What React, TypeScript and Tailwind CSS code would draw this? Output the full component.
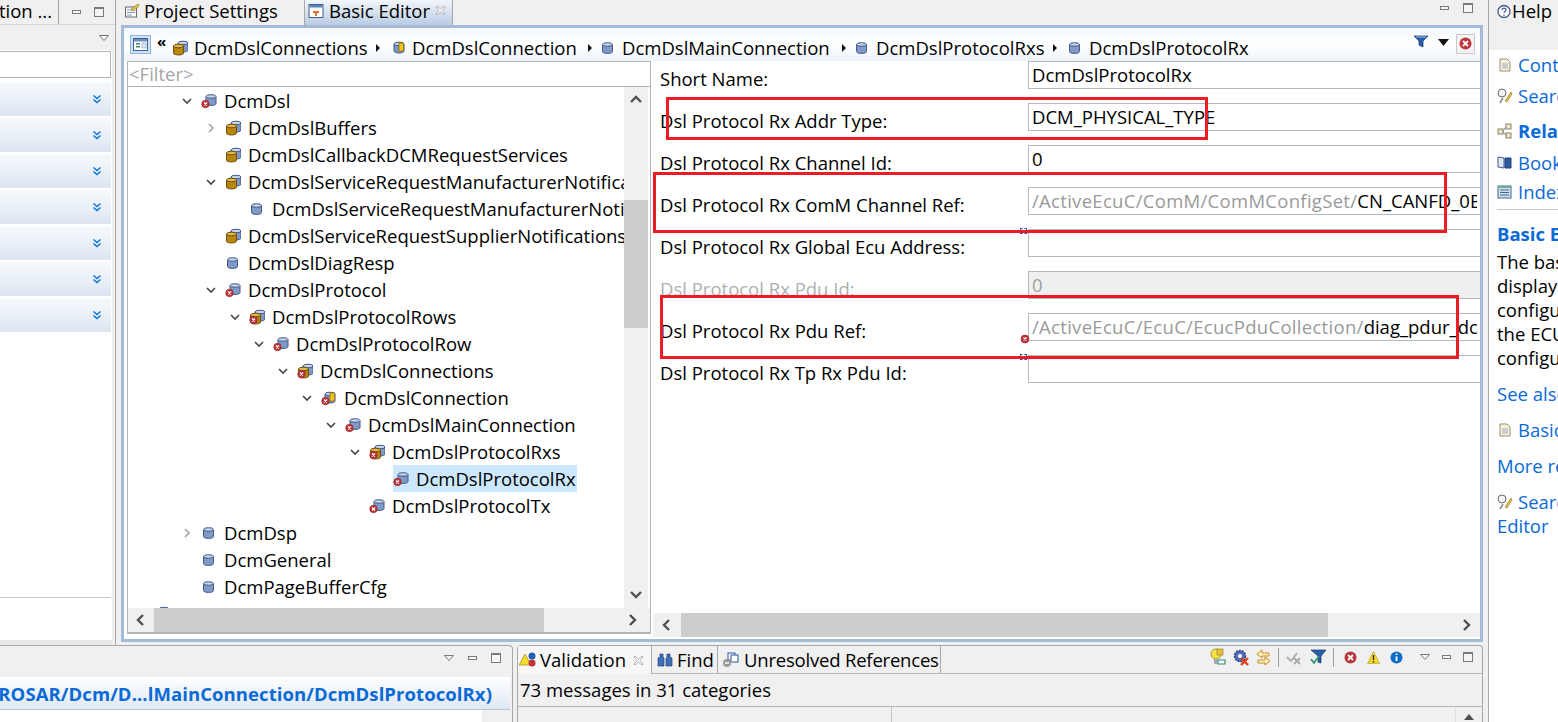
import React from "react";

const font = "font-['Open_Sans','Liberation_Sans',sans-serif]";

function Cyl({ x = 0, y = 0, fill = "#7f9ac4", top = "#c3d3ea", stroke = "#41598c", w = 10, h = 11 }: any) {
  return (
    <g>
      <path d={`M${x} ${y + 2}v${h - 4}c0 2.6 ${w} 2.6 ${w} 0v-${h - 4}`} fill={fill} stroke={stroke} strokeWidth="1" />
      <ellipse cx={x + w / 2} cy={y + 2} rx={w / 2} ry="1.8" fill={top} stroke={stroke} strokeWidth="1" />
    </g>
  );
}

function ErrBadge({ cx = 4.5, cy = 11, r = 3.8 }: any) {
  return (
    <g>
      <circle cx={cx} cy={cy} r={r} fill="#c0333a" stroke="#8c2a2a" strokeWidth=".6" />
      <path d={`M${cx - 1.5} ${cy - 1.5}l3 3m0-3l-3 3`} stroke="#fff" strokeWidth="1.1" />
    </g>
  );
}

function NodeIcon({ kind, err }: { kind: string; err?: boolean }) {
  return (
    <svg width="16" height="16" viewBox="0 0 16 16" className="shrink-0">
      {kind === "blue" && <Cyl x={err ? 5 : 2.5} y={err ? 1.5 : 2.5} />}
      {kind === "gold" && (
        <g>
          <Cyl x={6} y={1} />
          <Cyl x={1.5} y={4} w={10} fill="#b8860b" top="#e2b84c" stroke="#6f4f0a" />
        </g>
      )}
      {kind === "yellow" && (
        <g>
          <Cyl x={4} y={2} />
          <rect x="9" y="3" width="4.5" height="8" fill="#f5c518" stroke="#8a6d0a" strokeWidth=".7" />
        </g>
      )}
      {err && <ErrBadge />}
    </svg>
  );
}

function Chev({ open, light }: { open?: boolean; light?: boolean }) {
  return (
    <svg width="16" height="16" viewBox="0 0 16 16" className="shrink-0">
      {open ? (
        <path d="M4 6l4 4 4-4" fill="none" stroke="#4a4a4a" strokeWidth="1.7" />
      ) : (
        <path d="M6 4l4 4-4 4" fill="none" stroke={light ? "#a6a6a6" : "#4a4a4a"} strokeWidth="1.7" />
      )}
    </svg>
  );
}

const rows = [
  { t: "DcmDsl", pad: "pl-[51px]", open: true, kind: "blue", err: true },
  { t: "DcmDslBuffers", pad: "pl-[75px]", closed: true, kind: "gold" },
  { t: "DcmDslCallbackDCMRequestServices", pad: "pl-[75px]", kind: "gold" },
  { t: "DcmDslServiceRequestManufacturerNotifications", pad: "pl-[75px]", open: true, kind: "gold" },
  { t: "DcmDslServiceRequestManufacturerNotification", pad: "pl-[99px]", kind: "blue" },
  { t: "DcmDslServiceRequestSupplierNotifications", pad: "pl-[75px]", kind: "gold" },
  { t: "DcmDslDiagResp", pad: "pl-[75px]", kind: "blue" },
  { t: "DcmDslProtocol", pad: "pl-[75px]", open: true, kind: "blue", err: true },
  { t: "DcmDslProtocolRows", pad: "pl-[99px]", open: true, kind: "gold", err: true },
  { t: "DcmDslProtocolRow", pad: "pl-[123px]", open: true, kind: "blue", err: true },
  { t: "DcmDslConnections", pad: "pl-[147px]", open: true, kind: "gold", err: true },
  { t: "DcmDslConnection", pad: "pl-[171px]", open: true, kind: "yellow", err: true },
  { t: "DcmDslMainConnection", pad: "pl-[195px]", open: true, kind: "blue", err: true },
  { t: "DcmDslProtocolRxs", pad: "pl-[219px]", open: true, kind: "gold", err: true },
  { t: "DcmDslProtocolRx", pad: "pl-[243px]", kind: "blue", err: true, sel: true },
  { t: "DcmDslProtocolTx", pad: "pl-[219px]", kind: "blue", err: true },
  { t: "DcmDsp", pad: "pl-[51px]", closed: true, kind: "blue" },
  { t: "DcmGeneral", pad: "pl-[51px]", kind: "blue" },
  { t: "DcmPageBufferCfg", pad: "pl-[51px]", kind: "blue" },
  { t: "Fee", pad: "pl-[3px]", closed: true, kind: "gold" },
];

function Tree() {
  return (
    <div className="flex-1 min-w-0 overflow-hidden">
      {rows.map((r) => (
        <div key={r.t} className={`flex items-center h-[27px] whitespace-nowrap ${r.pad}`}>
          <span className="w-[16px] shrink-0">
            {r.open && <Chev open />}
            {r.closed && <Chev light />}
          </span>
          <span className={`flex items-center h-[27px] ml-[6px] pr-[1px] ${r.sel ? "bg-[#cce8ff]" : ""}`}>
            <NodeIcon kind={r.kind} err={r.err} />
            <span className="ml-[7px]">{r.t}</span>
          </span>
        </div>
      ))}
    </div>
  );
}

function Arrow({ d }: { d: string }) {
  return (
    <svg width="14" height="14" viewBox="0 0 14 14" className="shrink-0">
      <path d={d} fill="none" stroke="#505050" strokeWidth="2.4" />
    </svg>
  );
}

const LEFT = "M9 2L4 7l5 5";
const RIGHT = "M5 2l5 5-5 5";

function Field({ gray, text, disabled, mark }: any) {
  return (
    <div className={`relative flex-1 min-w-0 h-[28px] border border-[#b4b8c0] border-r-0 px-[3px] pb-[1px] flex items-center whitespace-nowrap ${disabled ? "bg-[#efefef] text-[#a0a0a0]" : "bg-white"}`}>
      <span className="overflow-hidden block w-full">
        {gray && <span className="text-[#9a9a9a] tracking-[0.3px]">{gray}</span>}
        {text}
      </span>
      {mark === "err" && (
        <svg width="10" height="10" viewBox="0 0 10 10" className="absolute left-[-9px] top-[20px]">
          <ErrBadge cx={5} cy={5} r={4} />
        </svg>
      )}
    </div>
  );
}

function Dash({ pos }: { pos: string }) {
  return <span className={`absolute w-[7px] h-[6px] border border-dashed border-[#2458a8] ${pos}`} />;
}

const formRows: any[] = [
  { l: "Short Name:", text: "DcmDslProtocolRx" },
  { l: "Dsl Protocol Rx Addr Type:", text: "DCM_PHYSICAL_TYPE" },
  { l: "Dsl Protocol Rx Channel Id:", text: "0" },
  { l: "Dsl Protocol Rx ComM Channel Ref:", gray: "/ActiveEcuC/ComM/ComMConfigSet/", text: "CN_CANFD_0B_BCM" },
  { l: "Dsl Protocol Rx Global Ecu Address:", text: "", dash: "left-[-8px] top-[-1px]" },
  { l: "Dsl Protocol Rx Pdu Id:", text: "0", disabled: true, dim: true },
  { l: "Dsl Protocol Rx Pdu Ref:", gray: "/ActiveEcuC/EcuC/EcucPduCollection/", text: "diag_pdur_dcm_rx_phys", mark: "err" },
  { l: "Dsl Protocol Rx Tp Rx Pdu Id:", text: "", dash: "left-[-8px] top-[-1px]" },
];

function Form() {
  return (
    <div className="flex-1 min-h-0 flex flex-col gap-[14px] overflow-hidden">
      {formRows.map((f) => (
        <div key={f.l} className="flex items-start pl-[7px] relative">
          <div className={`w-[368px] h-[28px] shrink-0 whitespace-nowrap pt-[6px] ${f.dim ? "text-[#b0b0b0]" : ""}`}>{f.l}</div>
          <div className="relative flex-1 min-w-0 flex">
            <Field gray={f.gray} text={f.text} disabled={f.disabled} mark={f.mark} />
            {f.dash && <Dash pos={f.dash} />}
          </div>
        </div>
      ))}
    </div>
  );
}

function ViewMin() {
  return <span className="block w-[9px] h-[4px] border border-[#7a7a7a] bg-[#f4f4f4]" />;
}
function ViewMax() {
  return <span className="block w-[10px] h-[10px] border border-[#7a7a7a] bg-[#f4f4f4] border-t-2" />;
}
function ViewMenu() {
  return (
    <svg width="10" height="6" viewBox="0 0 10 6">
      <path d="M.5.5h9L5 5.5z" fill="#f6f6f6" stroke="#7a7a7a" />
    </svg>
  );
}

function Tri() {
  return (
    <svg width="6" height="10" viewBox="0 0 6 10" className="shrink-0">
      <path d="M1 1l4 4-4 4z" fill="#111" />
    </svg>
  );
}

function Breadcrumb() {
  return (
    <div className="flex items-center h-[33px] shrink-0 pl-[6px] pr-[5px] bg-gradient-to-b from-[#f4f8fd] via-white to-[#eef3f9] overflow-hidden whitespace-nowrap">
      <span className="w-[21px] h-[19px] bg-[#cfe3f7] border border-[#8fb6de] flex items-center justify-center shrink-0 mb-[1px]">
        <svg width="15" height="13" viewBox="0 0 15 13">
          <rect x=".5" y=".5" width="14" height="12" fill="#fff" stroke="#3f5f8f" />
          <rect x="1" y="1" width="13" height="2.5" fill="#6f8fc0" />
          <rect x="3" y="5" width="4" height="1.5" fill="#3f8f6f" />
          <rect x="3" y="8" width="4" height="1.5" fill="#3f8f6f" />
          <rect x="9" y="5" width="4" height="5" fill="#dde6f2" stroke="#7a90b0" strokeWidth=".5" />
        </svg>
      </span>
      <span className="ml-[6px] w-[8px] text-[15px] font-bold leading-none mb-[6px] shrink-0">«</span>
      <span className="flex items-center mt-[7px] ml-[7px]">
        <NodeIcon kind="gold" />
        <span className="ml-[6px] w-[181px]">DcmDslConnections</span>
        <Tri />
        <span className="ml-[9px]"><NodeIcon kind="yellow" /></span>
        <span className="ml-[6px] w-[175px]">DcmDslConnection</span>
        <Tri />
        <span className="ml-[7px]"><NodeIcon kind="blue" /></span>
        <span className="ml-[6px] w-[219px]">DcmDslMainConnection</span>
        <Tri />
        <span className="ml-[7px]"><NodeIcon kind="blue" /></span>
        <span className="ml-[6px] w-[176px]">DcmDslProtocolRxs</span>
        <Tri />
        <span className="ml-[9px]"><NodeIcon kind="blue" /></span>
        <span className="ml-[6px]">DcmDslProtocolRx</span>
      </span>
      <span className="flex-1" />
      <svg width="16" height="13" viewBox="0 0 16 13" className="shrink-0 mb-[6px]">
        <path d="M1 1h14l-5 5v6l-4-2V6z" fill="#2a5ea8" stroke="#17356a" strokeWidth=".7" />
        <path d="M3 2h10" stroke="#8fc0f0" />
      </svg>
      <svg width="11" height="7" viewBox="0 0 11 7" className="ml-[9px] shrink-0 mb-[4px]">
        <path d="M0 0h11L5.500 7z" fill="#111" />
      </svg>
      <span className="ml-[7px] w-[19px] h-[20px] bg-[#f4f4f4] border border-[#c9c9c9] flex items-center justify-center shrink-0 mb-[2px]">
        <svg width="13" height="13" viewBox="0 0 13 13">
          <circle cx="6.500" cy="6.500" r="6" fill="#c0343b" />
          <path d="M4 4l5 5m0-5l-5 5" stroke="#fff" strokeWidth="1.800" />
        </svg>
      </span>
    </div>
  );
}

function Section() {
  return (
    <div className="h-[34px] bg-gradient-to-b from-[#f7fafd] to-[#dbe5f1] flex items-center justify-end pr-[9px]">
      <svg width="10" height="10" viewBox="0 0 10 10">
        <path d="M1.500 1.500L5 4.500l3.500-3M1.500 5.500L5 8.500l3.500-3" fill="none" stroke="#0a6fd8" strokeWidth="1.400" />
      </svg>
    </div>
  );
}

function LeftPanel() {
  return (
    <div className="w-[116px] shrink-0 flex flex-col border-r border-[#a8a8a8]">
      <div className="h-[25px] flex items-center border-b border-[#d6d6d6] overflow-hidden">
        <span className="w-[59px] h-full border-r border-[#a8a8a8] flex items-center justify-end pr-[6px] pb-[2px] whitespace-nowrap overflow-hidden shrink-0">
          tion ...
        </span>
        <span className="ml-[13px]"><ViewMin /></span>
        <span className="ml-[13px]"><ViewMax /></span>
      </div>
      <div className="flex-1 mr-[3px] flex flex-col min-h-0">
        <div className="h-[25px] flex items-center justify-end pr-[3px] shrink-0"><ViewMenu /></div>
        <div className="flex-1 bg-white flex flex-col pr-[1px] min-h-0">
          <div className="h-[30px] py-[1px] shrink-0">
            <div className="h-[27px] border border-[#b4b4b4] border-l-0 bg-white" />
          </div>
          <div className="flex flex-col gap-[2px] mt-[2px]">
            <Section /><Section /><Section /><Section /><Section /><Section /><Section />
          </div>
          <div className="mt-[265px] border-t border-[#c8c8c8] flex-1" />
        </div>
        <div className="h-[5px] bg-[#e6e6e6] shrink-0" />
      </div>
    </div>
  );
}

function Editor() {
  return (
    <div className="w-[1362px] shrink-0 flex flex-col ml-[5px] pb-[3px]">
      <div className="h-[25px] flex items-stretch pl-[1px] shrink-0">
        <div className="w-[183px] flex items-center pl-[2px] pb-[4px] border-r border-[#a8a8a8]">
          <svg width="16" height="16" viewBox="0 0 16 16" className="shrink-0">
            <rect x="1.500" y="4" width="11" height="10" fill="#fff" stroke="#6a6a6a" />
            <path d="M3 7h8M3 9.500h8M3 12h5" stroke="#7a8fb0" />
            <path d="M7 6l7-5 1 2-6 5z" fill="#e9c24c" stroke="#8a6d1a" strokeWidth=".6" />
          </svg>
          <span className="ml-[4px] whitespace-nowrap">Project Settings</span>
        </div>
        <div className="w-[148px] flex items-center pl-[3px] pb-[4px] bg-gradient-to-b from-[#f3f6fb] to-[#b9cce3] border-r border-[#a8a8a8]">
          <svg width="16" height="16" viewBox="0 0 16 16" className="shrink-0">
            <rect x="1" y="1.500" width="14" height="13" fill="#fff" stroke="#3f5f8f" />
            <rect x="1.500" y="2" width="13" height="2.500" fill="#5c7fbc" />
            <path d="M5 8h6v2H9v3H7v-3H5z" fill="#d9762a" />
          </svg>
          <span className="ml-[5px] whitespace-nowrap">Basic Editor</span>
          <svg width="11" height="11" viewBox="0 0 11 11" className="ml-[5px] shrink-0">
            <path d="M2 1l3.500 3L9 1l1 1-3 3.500 3 3.500-1 1-3.500-3L2 10 1 9l3-3.500L1 2z" fill="#fff" stroke="#9a9a9a" strokeWidth=".8" />
          </svg>
        </div>
        <div className="flex-1" />
        <div className="flex items-center gap-[14px] pr-[10px] pb-[10px]">
          <ViewMin /><ViewMax />
        </div>
      </div>
      <div className="flex-1 min-h-0 border-[3px] border-[#a3bbd7] bg-white flex flex-col">
        <Breadcrumb />
        <div className="flex-1 min-h-0 flex pl-[3px]">
          <div className="w-[524px] shrink-0 border border-[#b4b4b4] flex flex-col border-b-[2px] mb-[5px]">
            <div className="h-[25px] shrink-0 border-b border-[#b4b4b4] px-[1px] flex items-center text-[#a6a6a6]">&lt;Filter&gt;</div>
            <div className="flex-1 min-h-0 flex">
              <Tree />
              <div className="w-[24px] shrink-0 bg-[#f0f0f0] flex flex-col items-center">
                <div className="h-[113px] w-full shrink-0 pt-[6px] flex justify-center">
                  <Arrow d="M2 9l5-5 5 5" />
                </div>
                <div className="h-[128px] w-full bg-[#cdcdcd] shrink-0" />
                <div className="flex-1" />
                <div className="pb-[7px]"><Arrow d="M2 5l5 5 5-5" /></div>
              </div>
              <div className="w-[2px] shrink-0" />
            </div>
            <div className="h-[24px] shrink-0 bg-[#f0f0f0] flex items-center">
              <div className="w-[26px] flex justify-center"><Arrow d={LEFT} /></div>
              <div className="w-[390px] h-full bg-[#cdcdcd]" />
              <div className="flex-1" />
              <div className="w-[36px] flex justify-center"><Arrow d={RIGHT} /></div>
            </div>
          </div>
          <div className="flex-1 min-w-0 flex flex-col pl-[2px]">
            <Form />
            <div className="h-[24px] shrink-0 bg-[#f0f0f0] flex items-center mb-[2px]">
              <div className="w-[28px] flex justify-center"><Arrow d={LEFT} /></div>
              <div className="w-[647px] h-full bg-[#cdcdcd]" />
              <div className="flex-1" />
              <div className="w-[28px] flex justify-center"><Arrow d={RIGHT} /></div>
            </div>
          </div>
        </div>
      </div>
    </div>
  );
}

function HelpIcon({ c }: { c: string }) {
  if (c === "key")
    return (
      <svg width="16" height="16" viewBox="0 0 16 16" className="shrink-0">
        <circle cx="5" cy="5" r="4" fill="#f4f4f4" stroke="#6a6a6a" />
        <path d="M8 13l6-9 1 2-5 8z" fill="#e9c24c" stroke="#8a6d1a" strokeWidth=".6" />
        <path d="M3 15l3-5" stroke="#888" strokeWidth="1.500" />
      </svg>
    );
  if (c === "rel")
    return (
      <svg width="16" height="16" viewBox="0 0 16 16" className="shrink-0">
        <rect x="1" y="6" width="5" height="5" fill="#efe8cf" stroke="#8a8460" />
        <rect x="9" y="1" width="5" height="5" fill="#efe8cf" stroke="#8a8460" />
        <rect x="9" y="10" width="5" height="5" fill="#efe8cf" stroke="#8a8460" />
        <path d="M6 8l3-4M6 9l3 3" stroke="#6a7a9a" />
      </svg>
    );
  if (c === "book")
    return (
      <svg width="16" height="16" viewBox="0 0 16 16" className="shrink-0">
        <path d="M1 2l6 1v10l-6-1z" fill="#dfe8f5" stroke="#41598c" />
        <path d="M8 3h6v10H8z" fill="#2c5aa0" stroke="#1e3f78" />
      </svg>
    );
  if (c === "index")
    return (
      <svg width="16" height="16" viewBox="0 0 16 16" className="shrink-0">
        <rect x="1" y="2" width="13" height="12" fill="#cfe0f2" stroke="#41698c" />
        <path d="M3 6h9M3 8.500h9M3 11h9" stroke="#41698c" />
        <path d="M1 2h13v2H1z" fill="#6fae8f" />
      </svg>
    );
  return (
    <svg width="16" height="16" viewBox="0 0 16 16" className="shrink-0">
      <path d="M3 2h7l3 3v9H3z" fill="#f7f3e2" stroke="#9a8f62" />
      <path d="M5 7h6M5 9h6M5 11h6" stroke="#9aa6c0" />
    </svg>
  );
}

function HelpPanel() {
  const L = "text-[#0a6ad6]";
  return (
    <div className="w-[70px] shrink-0 ml-[5px] border-l border-[#a8a8a8] flex flex-col overflow-hidden whitespace-nowrap">
      <div className="h-[25px] shrink-0 pl-[7px] pb-[3px] flex items-center">
        <svg width="15" height="15" viewBox="0 0 15 15" className="shrink-0">
          <circle cx="8" cy="7.500" r="6" fill="#fff" stroke="#41598c" strokeWidth="1.300" />
          <path d="M6 6c0-2.500 4-2.500 4 0 0 1.500-2 1.500-2 3M8 10.500v1.500" fill="none" stroke="#41598c" strokeWidth="1.200" />
        </svg>
        <span className="ml-[1px]">Help</span>
      </div>
      <div className="h-[25px] shrink-0" />
      <div className="flex-1 bg-white pl-[8px] flex flex-col">
        <div className={`flex items-center h-[30px] ${L}`}><HelpIcon c="page" /><span className="ml-[5px]">Contents</span></div>
        <div className={`flex items-center h-[32px] ${L}`}><HelpIcon c="key" /><span className="ml-[5px]">Search</span></div>
        <div className={`flex items-center h-[38px] ${L} font-bold`}><HelpIcon c="rel" /><span className="ml-[5px]">Related Topics</span></div>
        <div className={`flex items-center h-[26px] ${L}`}><HelpIcon c="book" /><span className="ml-[5px]">Bookmarks</span></div>
        <div className={`flex items-center h-[32px] ${L}`}><HelpIcon c="index" /><span className="ml-[5px]">Index</span></div>
        <div className="border-t border-[#c8c8c8] mt-[1px]" />
        <div className={`h-[26px] mt-[11px] flex items-center font-bold ${L}`}>Basic Editor</div>
        <div className="leading-[24px] mt-[3px]">
          <div>The basic editor</div>
          <div>displays the</div>
          <div>configuration of</div>
          <div>the ECU</div>
          <div>configuration</div>
        </div>
        <div className={`mt-[12px] h-[24px] flex items-center ${L}`}>See also</div>
        <div className={`mt-[12px] h-[24px] flex items-center ${L}`}><HelpIcon c="page" /><span className="ml-[5px]">Basic</span></div>
        <div className={`mt-[12px] h-[24px] flex items-center ${L}`}>More results</div>
        <div className={`mt-[12px] h-[24px] flex items-center ${L}`}><HelpIcon c="key" /><span className="ml-[5px]">Search</span></div>
        <div className={`h-[24px] flex items-center ${L}`}>Editor</div>
      </div>
    </div>
  );
}

function BottomLeft() {
  return (
    <div className="w-[513px] shrink-0 border border-[#a8a8a8] border-l-0 border-b-0 rounded-tr-[4px] flex flex-col overflow-hidden">
      <div className="h-[28px] shrink-0 flex items-center justify-end gap-[14px] pr-[11px] pb-[5px]">
        <ViewMenu /><ViewMin /><ViewMax />
      </div>
      <div className="mr-[2px] bg-white flex flex-col mt-[3px] shrink-0">
        <div className="h-[33px] pt-[2px] bg-gradient-to-b from-white to-[#dfe8f3] border-b border-[#b8c6d6] flex items-center justify-end pr-[18px] whitespace-nowrap overflow-hidden text-[#0a6ad6] font-bold tracking-[0.08px]">
          ROSAR/Dcm/D...lMainConnection/DcmDslProtocolRx)
        </div>
      </div>
      <div className="flex-1 flex">
        <div className="flex-1 bg-white" />
        <div className="w-[30px]" />
      </div>
    </div>
  );
}

function ToolIcons() {
  return (
    <div className="flex items-center">
      <svg width="18" height="18" viewBox="0 0 18 18">
        <circle cx="7" cy="6" r="5" fill="#f6e24a" stroke="#a89a20" />
        <rect x="8" y="1" width="6" height="6" fill="#e8c23a" stroke="#8a7a20" strokeWidth=".6" />
        <path d="M5 11h3v5H5z" fill="#aaa" />
        <path d="M9 12h7v4H9z" fill="#fff" stroke="#2f8a7a" strokeWidth="1.200" />
      </svg>
      <svg width="17" height="17" viewBox="0 0 17 17" className="ml-[6px]">
        <circle cx="7" cy="7" r="5.500" fill="#4f6fb8" stroke="#2c427c" strokeDasharray="2 1" strokeWidth="1.500" />
        <circle cx="7" cy="7" r="2" fill="#fff" />
        <path d="M8 9l7 7m0-7l-7 7" stroke="#e0401c" strokeWidth="2.400" />
      </svg>
      <svg width="17" height="17" viewBox="0 0 17 17" className="ml-[5px]">
        <path d="M7 1L2 5l5 4V7h7V4H7zM10 8l5 4-5 4v-2H3v-3h7z" fill="#fdf0c8" stroke="#c98a12" strokeWidth="1" />
      </svg>
      <span className="w-px h-[19px] bg-[#a0a0a0] ml-[6px]" />
      <svg width="16" height="16" viewBox="0 0 16 16" className="ml-[7px]">
        <path d="M1 8l4 4 6-8" fill="none" stroke="#b0b0b0" strokeWidth="2" />
        <path d="M8 9l6 6m0-6l-6 6" stroke="#a8a8a8" strokeWidth="2" />
      </svg>
      <svg width="16" height="16" viewBox="0 0 16 16" className="ml-[8px]">
        <path d="M1 1h15l-5 6v7l-3-1V7z" fill="#2a5ea8" stroke="#17356a" strokeWidth=".7" />
        <path d="M1 10l3 4 5-7" fill="none" stroke="#2f9a6a" strokeWidth="1.800" />
      </svg>
      <span className="w-px h-[19px] bg-[#a0a0a0] ml-[7px]" />
      <svg width="13" height="13" viewBox="0 0 13 13" className="ml-[10px]">
        <circle cx="6.500" cy="6.500" r="6" fill="#b9353a" />
        <path d="M4 4l5 5m0-5l-5 5" stroke="#fff" strokeWidth="1.800" />
      </svg>
      <svg width="13" height="13" viewBox="0 0 13 13" className="ml-[10px]">
        <path d="M6.500 .5l6 12H.5z" fill="#f6d92a" stroke="#a89a20" strokeWidth=".6" />
        <path d="M6.500 4v5M6.500 10v1.500" stroke="#222" strokeWidth="1.300" />
      </svg>
      <svg width="13" height="13" viewBox="0 0 13 13" className="ml-[10px]">
        <circle cx="6.500" cy="6.500" r="6" fill="#0e6cc4" />
        <path d="M6.500 5.500v4.500M6.500 2.500v1.500" stroke="#fff" strokeWidth="1.800" />
      </svg>
      <span className="ml-[17px]"><ViewMenu /></span>
      <span className="ml-[12px]"><ViewMin /></span>
      <span className="ml-[12px] mr-[9px]"><ViewMax /></span>
    </div>
  );
}

function Validation() {
  return (
    <div className="flex-1 min-w-0 ml-[4px] border border-[#a8a8a8] border-b-0 rounded-t-[4px] flex flex-col">
      <div className="h-[28px] shrink-0 flex items-stretch border-b border-[#b8b8b8] whitespace-nowrap">
        <div className="w-[134px] shrink-0 flex items-center pl-[1px] bg-[#f7f7f7] border-r border-[#a8a8a8] -mb-px">
          <svg width="20" height="18" viewBox="0 0 20 18" className="shrink-0">
            <path d="M6 3l6 11H0z" fill="#f6d92a" stroke="#9a8a20" strokeWidth=".7" />
            <circle cx="13" cy="5" r="3.500" fill="#1d5fb5" />
            <circle cx="13" cy="12" r="3.500" fill="#c0333a" />
          </svg>
          <span className="ml-[1px]">Validation</span>
          <svg width="11" height="11" viewBox="0 0 11 11" className="ml-[7px] shrink-0">
            <path d="M2 1l3.500 3L9 1l1 1-3 3.500 3 3.500-1 1-3.500-3L2 10 1 9l3-3.500L1 2z" fill="#fff" stroke="#9a9a9a" strokeWidth=".8" />
          </svg>
        </div>
        <div className="w-[66px] shrink-0 flex items-center pl-[5px] border-r border-[#a8a8a8]">
          <svg width="16" height="14" viewBox="0 0 16 14" className="shrink-0">
            <path d="M3 1h3v3l1 1v8H1V5l2-1zM10 1h3v3l2 1v8H9V5l1-1z" fill="#3f6fb8" stroke="#23447a" strokeWidth=".7" />
          </svg>
          <span className="ml-[4px]">Find</span>
        </div>
        <div className="w-[223px] shrink-0 flex items-center pl-[4px] border-r border-[#a8a8a8]">
          <svg width="17" height="16" viewBox="0 0 17 16" className="shrink-0">
            <rect x="6" y="1" width="7" height="7" fill="#fff" stroke="#2c5aa0" />
            <rect x="9" y="3" width="7" height="7" fill="#fff" stroke="#2c5aa0" />
            <circle cx="5" cy="11" r="4" fill="#9a9a9a" />
            <path d="M3 11h4" stroke="#fff" strokeWidth="1.400" />
          </svg>
          <span className="ml-[5px] tracking-[-0.2px]">Unresolved References</span>
        </div>
        <div className="flex-1 flex items-center justify-end -mt-[5px]"><ToolIcons /></div>
      </div>
      <div className="h-[33px] shrink-0 flex items-center pl-[2px] border-b border-[#b4b4b4]">73 messages in 31 categories</div>
      <div className="flex-1 flex">
        <div className="w-[372px] ml-[2px] border-r border-[#c8c8c8]" />
        <div className="flex-1" />
        <div className="w-[27px] border-l border-[#e0e0e0] flex justify-center pt-[7px]">
          <svg width="10" height="6" viewBox="0 0 10 6"><path d="M5 0l5 6H0z" fill="#505050" /></svg>
        </div>
      </div>
    </div>
  );
}

const Red = ({ c }: { c: string }) => <div className={`absolute border-[3px] border-[#ed1c24] pointer-events-none ${c}`} />;

export default function App() {
  return (
    <div className={`relative w-[1558px] h-[722px] overflow-hidden bg-[#f0f0f0] text-[#000] flex text-[18.5px] leading-[24px] ${font}`}>
      <div className="w-[1483px] shrink-0 flex flex-col">
        <div className="h-[645px] shrink-0 flex">
          <LeftPanel />
          <Editor />
        </div>
        <div className="flex-1 min-h-0 flex">
          <BottomLeft />
          <Validation />
        </div>
      </div>
      <HelpPanel />
      <Red c="left-[666px] top-[97px] w-[542px] h-[43px]" />
      <Red c="left-[653px] top-[172px] w-[794px] h-[61px]" />
      <Red c="left-[660px] top-[295px] w-[799px] h-[64px]" />
    </div>
  );
}
